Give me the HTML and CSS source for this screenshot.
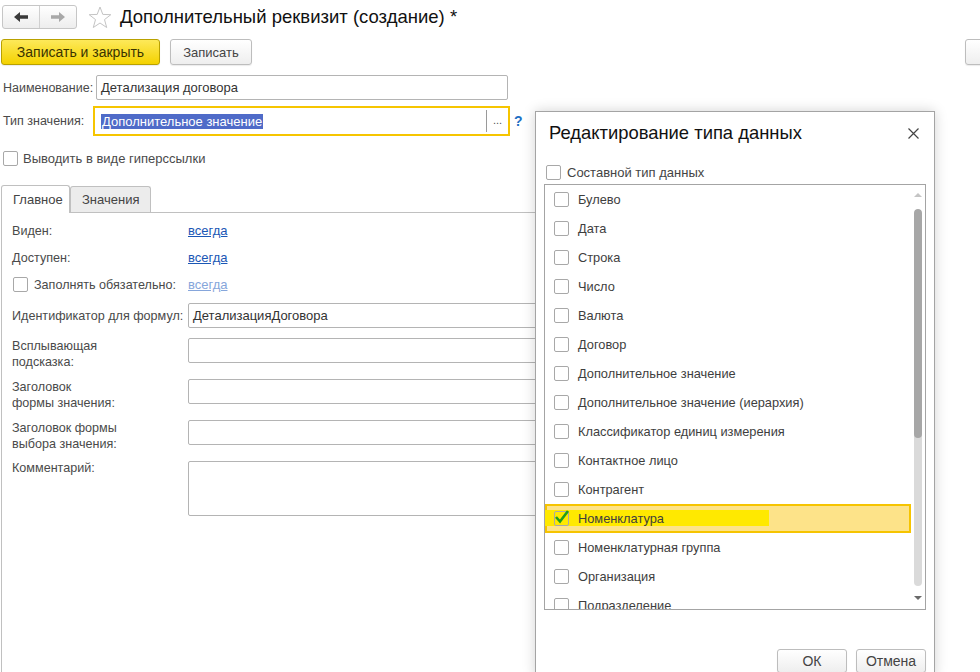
FILE: index.html
```html
<!DOCTYPE html>
<html lang="ru">
<head>
  <meta charset="UTF-8" />
  <title>Дополнительный реквизит (создание)</title>
  <link rel="stylesheet" href="styles.css">
</head>
<body>

  <!-- Заголовок формы -->
  <div class="titlebar">
    <div class="nav">
      <span class="nav-btn">
        <svg width="14" height="10" viewBox="0 0 14 10"><path d="M0 5 L6 0 L6 3.3 L14 3.3 L14 6.7 L6 6.7 L6 10 Z" fill="#3a3a3a"/></svg>
      </span>
      <span class="nav-btn">
        <svg width="14" height="10" viewBox="0 0 14 10"><path d="M14 5 L8 0 L8 3.3 L0 3.3 L0 6.7 L8 6.7 L8 10 Z" fill="#a8a8a8"/></svg>
      </span>
    </div>
    <svg class="star" width="24" height="23" viewBox="0 0 24 23">
      <polygon points="12,1 14.8,8.4 22.8,8.7 16.5,13.6 18.7,21.5 12,17 5.3,21.5 7.5,13.6 1.2,8.7 9.2,8.4" fill="none" stroke="#c4c4c4" stroke-width="1"/>
    </svg>
    <h1>Дополнительный реквизит (создание) *</h1>
  </div>

  <div class="toolbar">
    <span class="btn btn-main">Записать и закрыть</span>
    <span class="btn btn-save">Записать</span>
    <span class="btn btn-more"></span>
  </div>

  <!-- Шапка -->
  <div class="form">
    <div class="row">
      <span class="label">Наименование:</span>
      <span class="field name-field">Детализация договора</span>
    </div>
    <div class="row row-type">
      <span class="label">Тип значения:</span>
      <span class="type-box">
        <span class="type-text"><span class="selected">Дополнительное значение</span></span>
        <span class="dots">...</span>
      </span>
      <span class="help">?</span>
    </div>
    <div class="row row-check">
      <span class="check"></span>
      <span>Выводить в виде гиперссылки</span>
    </div>
  </div>

  <!-- Закладки -->
  <div class="tabs">
    <span class="tab tab-active">Главное</span>
    <span class="tab">Значения</span>
  </div>
  <div class="panel">
    <div class="prow">
      <span class="plabel">Виден:</span>
      <a class="link" href="#">всегда</a>
    </div>
    <div class="prow">
      <span class="plabel">Доступен:</span>
      <a class="link" href="#">всегда</a>
    </div>
    <div class="prow">
      <span class="plabel plabel-check"><span class="check"></span>Заполнять обязательно:</span>
      <a class="link link-off" href="#">всегда</a>
    </div>
    <div class="frow frow-first">
      <span class="plabel">Идентификатор для формул:</span>
      <span class="field wide">ДетализацияДоговора</span>
    </div>
    <div class="frow">
      <span class="plabel two">Всплывающая<br>подсказка:</span>
      <span class="field wide"></span>
    </div>
    <div class="frow">
      <span class="plabel two">Заголовок<br>формы значения:</span>
      <span class="field wide"></span>
    </div>
    <div class="frow">
      <span class="plabel two">Заголовок формы<br>выбора значения:</span>
      <span class="field wide"></span>
    </div>
    <div class="frow">
      <span class="plabel">Комментарий:</span>
      <span class="field wide memo"></span>
    </div>
  </div>

  <!-- Окно редактирования типа -->
  <div class="dialog">
    <div class="dlg-head">
      <span class="dlg-title">Редактирование типа данных</span>
      <svg class="close" width="11" height="11" viewBox="0 0 11 11"><path d="M0.5 0.5 L10.5 10.5 M10.5 0.5 L0.5 10.5" stroke="#444" stroke-width="1.2"/></svg>
    </div>
    <div class="compound">
      <span class="check"></span>
      <span>Составной тип данных</span>
    </div>
    <div class="list">
      <div class="items">
        <div class="item"><span class="check"></span>Булево</div>
        <div class="item"><span class="check"></span>Дата</div>
        <div class="item"><span class="check"></span>Строка</div>
        <div class="item"><span class="check"></span>Число</div>
        <div class="item"><span class="check"></span>Валюта</div>
        <div class="item"><span class="check"></span>Договор</div>
        <div class="item"><span class="check"></span>Дополнительное значение</div>
        <div class="item"><span class="check"></span>Дополнительное значение (иерархия)</div>
        <div class="item"><span class="check"></span>Классификатор единиц измерения</div>
        <div class="item"><span class="check"></span>Контактное лицо</div>
        <div class="item"><span class="check"></span>Контрагент</div>
        <div class="item item-current">
          <span class="marker"></span>
          <span class="check checked">
            <svg width="16" height="14" viewBox="0 0 16 14"><path d="M2 7 L6 11.5 L14 1" fill="none" stroke="#1e9e1e" stroke-width="2.6"/></svg>
          </span>
          <span class="item-text">Номенклатура</span>
        </div>
        <div class="item"><span class="check"></span>Номенклатурная группа</div>
        <div class="item"><span class="check"></span>Организация</div>
        <div class="item"><span class="check"></span>Подразделение</div>
      </div>
      <div class="scroll">
        <span class="arrow-up"></span>
        <div class="track"><div class="thumb"></div></div>
        <span class="arrow-down"></span>
      </div>
    </div>
    <div class="dlg-buttons">
      <span class="btn dlg-btn">ОК</span>
      <span class="btn dlg-btn">Отмена</span>
    </div>
  </div>

</body>
</html>
```

FILE: styles.css
```css
body {
  margin: 0;
  font-family: "Liberation Sans", Arial, sans-serif;
  font-size: 13px;
  color: #4a4a4a;
  background: #fff;
  overflow: hidden;
  height: 672px;
  position: relative;
}

/* Заголовок */
.titlebar {
  display: flex;
  align-items: center;
  padding: 5px 0 0 2px;
  height: 24px;
}
.nav {
  display: flex;
  height: 22px;
  border: 1px solid #c6c6c6;
  border-radius: 3px;
  background: linear-gradient(#ffffff, #ededed);
}
.nav-btn {
  width: 36px;
  display: flex;
  align-items: center;
  justify-content: center;
}
.nav-btn + .nav-btn {
  border-left: 1px solid #d0d0d0;
}
.star {
  margin-left: 11px;
}
.titlebar h1 {
  margin: 0 0 0 8px;
  font-size: 18.5px;
  font-weight: normal;
  color: #111;
  white-space: nowrap;
}

/* Кнопки */
.toolbar {
  display: flex;
  gap: 10px;
  margin-top: 10px;
  padding-left: 1px;
}
.btn {
  box-sizing: border-box;
  height: 26px;
  display: flex;
  align-items: center;
  justify-content: center;
  border: 1px solid #bdbdbd;
  border-radius: 3px;
  background: linear-gradient(#ffffff, #eeeeee);
  box-shadow: 0 1px 1px rgba(0,0,0,0.08);
  font-size: 13px;
  color: #444;
  white-space: nowrap;
}
.btn-main {
  width: 159px;
  font-size: 14px;
  color: #3a3300;
  border-color: #b9a100;
  background: linear-gradient(#fde95a, #f4d200);
}
.btn-save {
  width: 82px;
}
.btn-more {
  width: 20px;
  margin-left: auto;
  margin-right: -5px;
}

/* Шапка */
.form {
  padding-left: 3px;
}
.row {
  display: flex;
  align-items: center;
  margin-top: 10px;
}
.label {
  width: 90px;
  flex: none;
  white-space: nowrap;
  font-size: 12.5px;
}
.field {
  box-sizing: border-box;
  height: 25px;
  border: 1px solid #b4b4b4;
  border-radius: 2px;
  background: #fff;
  color: #333;
  display: flex;
  align-items: center;
  padding-left: 4px;
  white-space: nowrap;
}
.name-field {
  width: 412px;
  margin-left: 3px;
}
.row-type {
  margin-top: 6px;
}
.type-box {
  box-sizing: border-box;
  width: 417px;
  height: 30px;
  border: 2px solid #f6c500;
  display: flex;
  align-items: center;
  padding: 0 0 0 6px;
}
.type-text {
  flex: 1;
}
.selected {
  background: #4f6bc8;
  color: #fff;
  padding: 0 1px;
}
.dots {
  height: 22px;
  width: 22px;
  border-left: 1px solid #9a9a9a;
  display: flex;
  justify-content: center;
  align-items: center;
  padding-bottom: 3px;
  box-sizing: border-box;
  font-size: 11px;
  color: #555;
}
.help {
  margin-left: 4px;
  color: #1d6fc4;
  font-weight: bold;
  font-size: 14px;
}
.row-check {
  margin-top: 15px;
  height: 15px;
  gap: 5px;
}
.check {
  box-sizing: border-box;
  width: 15px;
  height: 15px;
  flex: none;
  border: 1px solid #a8a8a8;
  border-radius: 2px;
  background: #fff;
  display: inline-flex;
  align-items: center;
  justify-content: center;
}

/* Закладки */
.tabs {
  display: flex;
  align-items: flex-end;
  margin-top: 19px;
  padding-left: 1px;
  height: 27px;
}
.tab {
  box-sizing: border-box;
  height: 26px;
  padding: 0 11px;
  display: flex;
  align-items: center;
  border: 1px solid #c0c0c0;
  border-bottom: none;
  border-radius: 3px 3px 0 0;
  background: #ececec;
  color: #444;
}
.tab-active {
  height: 28px;
  margin-bottom: -1px;
  background: #fff;
  width: 69px;
  position: relative;
  z-index: 1;
}
.panel {
  box-sizing: border-box;
  margin-left: 1px;
  width: 760px;
  height: 480px;
  border: 1px solid #c0c0c0;
  padding: 4px 0 0 10px;
}
.prow {
  display: flex;
  align-items: center;
  height: 27px;
}
.plabel {
  width: 176px;
  flex: none;
  white-space: nowrap;
  font-size: 12.6px;
}
.plabel-check {
  display: flex;
  align-items: center;
  gap: 6px;
  margin-left: 1px;
  width: 175px;
}
.link {
  color: #1b57b5;
}
.link-off {
  color: #86a6db;
}
.frow {
  display: flex;
  align-items: flex-start;
  margin-top: 9px;
}
.frow-first {
  margin-top: 5px;
  align-items: center;
}
.frow-first + .frow {
  margin-top: 10px;
}
.two {
  line-height: 16px;
  height: 32px;
}
.wide {
  width: 560px;
}
.memo {
  height: 55px;
}

/* Окно */
.dialog {
  position: absolute;
  left: 535px;
  top: 111px;
  width: 400px;
  height: 566px;
  box-sizing: border-box;
  border: 1px solid #a4a4a4;
  background: #fff;
  box-shadow: 0 0 12px rgba(0,0,0,0.18);
  z-index: 5;
}
.dlg-head {
  display: flex;
  align-items: center;
  justify-content: space-between;
  padding: 10px 15px 0 13px;
  height: 22px;
}
.dlg-title {
  font-size: 18.4px;
  color: #111;
}
.compound {
  display: flex;
  align-items: center;
  gap: 6px;
  margin: 21px 0 0 10px;
  height: 15px;
  color: #444;
}
.list {
  display: flex;
  box-sizing: border-box;
  width: 382px;
  height: 426px;
  margin: 4px 0 0 8px;
  border: 1px solid #a4a4a4;
  overflow: hidden;
}
.items {
  width: 366px;
  flex: none;
}
.item {
  box-sizing: border-box;
  height: 29px;
  display: flex;
  align-items: center;
  gap: 9px;
  padding-left: 9px;
  color: #3e3e3e;
  white-space: nowrap;
  position: relative;
  font-size: 12.8px;
}
.item-current {
  border: 2px solid #f6c400;
  background: #fde389;
  padding-left: 7px;
}
.marker {
  position: absolute;
  left: -2px;
  top: 4px;
  width: 224px;
  height: 16px;
  background: #ffe900;
}
.item-current .check,
.item-current .item-text {
  position: relative;
}
.checked {
  background: transparent;
  align-items: flex-end;
  overflow: visible;
}
.checked svg {
  margin-bottom: 1px;
  flex: none;
}
.scroll {
  width: 14px;
  flex: none;
  display: flex;
  flex-direction: column;
  align-items: center;
}
.arrow-up {
  margin-top: 8px;
  margin-bottom: 12px;
  width: 0;
  height: 0;
  border-left: 4px solid transparent;
  border-right: 4px solid transparent;
  border-bottom: 4px solid #c4c4c4;
}
.track {
  width: 8px;
  height: 377px;
  background: #dadada;
  border-radius: 4px;
  overflow: hidden;
}
.thumb {
  height: 229px;
  background: #a7a7a7;
  border-radius: 4px;
}
.arrow-down {
  margin-top: 10px;
  width: 0;
  height: 0;
  border-left: 4px solid transparent;
  border-right: 4px solid transparent;
  border-top: 4px solid #6a6a6a;
}
.dlg-buttons {
  display: flex;
  justify-content: flex-end;
  gap: 9px;
  width: 390px;
  margin-top: 39px;
}
.dlg-btn {
  width: 70px;
  height: 24px;
  font-size: 14px;
  color: #444;
}
```
